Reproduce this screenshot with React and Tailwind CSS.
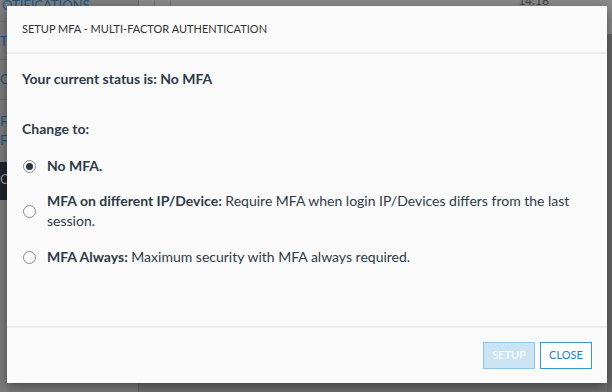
import React from "react";

function Radio({ checked }) {
  return (
    <span className="flex h-[13px] w-[13px] shrink-0 items-center justify-center rounded-full border border-[#8a8a8a] bg-white">
      {checked && <span className="h-[7px] w-[7px] rounded-full bg-[#2c3645]" />}
    </span>
  );
}

export default function App() {
  return (
    <div
      className="relative h-[392px] w-[612px] overflow-hidden bg-[#747474]"
      style={{ fontFamily: "Lato, 'Open Sans', sans-serif" }}
    >
      {/* dimmed page behind */}
      <div className="flex h-full">
        <div className="flex w-[139px] flex-col border-r border-[#666] bg-[#7e7e7e] text-[13px] text-[#1f5a85]">
          <div className="h-[22px] border-b border-[#737373] pl-[2px] leading-[10px]">OTIFICATIONS</div>
          <div className="h-[38px] border-b border-[#737373] pt-[12px] leading-[14px]">T</div>
          <div className="h-[40px] border-b border-[#737373] pt-[12px] leading-[14px]">C</div>
          <div className="h-[62px] pt-[12px] leading-[19px]">
            <div>F</div>
            <div>F</div>
          </div>
          <div className="h-[38px] bg-[#1e252d] pt-[10px] leading-[14px] text-[#9a9a9a]">C</div>
          <div className="flex-1" />
        </div>
        <div className="flex flex-1 flex-col">
          <div className="flex h-[7px] bg-[#8a8a8a]">
            <div className="w-[16px] border-r border-[#777]" />
            <div className="w-[16px] border-r border-[#777]" />
            <div className="flex-1" />
            <div className="mr-[58px] mt-[-8px] text-[12px] text-[#444]">14:16</div>
          </div>
          <div className="flex-1" />
        </div>
        <div className="flex w-[5px] flex-col bg-[#6a6a6a]">
          <div className="h-[34px] bg-[#8c8c8c]" />
        </div>
      </div>

      {/* modal */}
      <div className="absolute left-[7px] top-[6px] flex h-[377px] w-[600px] flex-col bg-[#fafafa] shadow-[0_4px_12px_rgba(0,0,0,0.45)]">
        <div className="flex h-[48px] items-center border-b-2 border-[#eeeeee] px-[15px] pt-[1px] text-[11px] text-[#333]">
          SETUP MFA - MULTI-FACTOR AUTHENTICATION
        </div>
        <div className="flex flex-1 flex-col px-[15px] pt-[15px] text-[14px] leading-[20px] text-[#2f3a48]">
          <div className="font-bold">Your current status is: No MFA</div>
          <div className="mt-[30px] font-bold">Change to:</div>
          <div className="mt-[17px] flex items-center gap-[11px] pl-[1px]">
            <Radio checked />
            <span className="font-bold">No MFA.</span>
          </div>
          <div className="mt-[15px] flex items-center gap-[11px] pl-[1px]">
            <Radio />
            <span>
              <b>MFA on different IP/Device:</b> Require MFA when login IP/Devices differs from the last
              <br />
              session.
            </span>
          </div>
          <div className="mt-[16px] flex items-center gap-[11px] pl-[1px]">
            <Radio />
            <span>
              <b>MFA Always:</b> Maximum security with MFA always required.
            </span>
          </div>
        </div>
        <div className="flex h-[57px] items-start justify-end gap-[5px] border-t-2 border-[#eeeeee] px-[15px] pt-[14px]">
          <button className="flex h-[27px] w-[52px] items-center justify-center border border-[#8ec5e8] bg-[#cbe4f3] text-[11px] text-white">
            SETUP
          </button>
          <button className="flex h-[27px] w-[52px] items-center justify-center border border-[#3a95d3] bg-white text-[11px] text-[#1f80c6]">
            CLOSE
          </button>
        </div>
      </div>
    </div>
  );
}
